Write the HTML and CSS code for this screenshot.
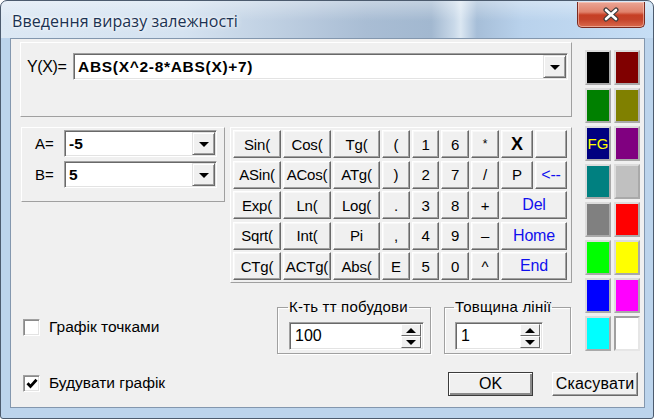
FILE: index.html
```html
<!DOCTYPE html>
<html>
<head>
<meta charset="utf-8">
<link rel="stylesheet" href="styles.css">
</head>
<body>
<div class="window">
  <div class="titlebar">
    <span class="title">Введення виразу залежності</span>
    <div class="close">
      <svg width="20" height="15" viewBox="0 0 20 15">
        <path d="M5 3 L15 12 M15 3 L5 12" stroke="#3d3d3d" stroke-width="5" stroke-linecap="round"/>
        <path d="M5 3 L15 12 M15 3 L5 12" stroke="#ffffff" stroke-width="2.6" stroke-linecap="round"/>
      </svg>
    </div>
  </div>
  <div class="client">
    <div class="upper">
      <div class="leftcol">
        <div class="panel top-panel">
          <span class="lbl yx">Y(X)=</span>
          <div class="combo wide"><span class="val main-val">ABS(X^2-8*ABS(X)+7)</span><span class="dd"><i class="tri"></i></span></div>
        </div>
        <div class="mid">
          <div class="panel ab-panel">
            <div class="ab-row"><span class="lbl ab">A=</span><div class="combo ab-combo"><span class="val">-5</span><span class="dd"><i class="tri"></i></span></div></div>
            <div class="ab-row"><span class="lbl ab">B=</span><div class="combo ab-combo"><span class="val">5</span><span class="dd"><i class="tri"></i></span></div></div>
          </div>
          <div class="panel keypad">
            <div class="key">Sin(</div><div class="key">Cos(</div><div class="key">Tg(</div><div class="key">(</div><div class="key">1</div><div class="key">6</div><div class="key star">*</div><div class="key bold">X</div><div class="key"></div>
            <div class="key">ASin(</div><div class="key">ACos(</div><div class="key">ATg(</div><div class="key">)</div><div class="key">2</div><div class="key">7</div><div class="key">/</div><div class="key">P</div><div class="key blue">&lt;--</div>
            <div class="key">Exp(</div><div class="key">Ln(</div><div class="key">Log(</div><div class="key">.</div><div class="key">3</div><div class="key">8</div><div class="key">+</div><div class="key blue span2">Del</div>
            <div class="key">Sqrt(</div><div class="key">Int(</div><div class="key">Pi</div><div class="key">,</div><div class="key">4</div><div class="key">9</div><div class="key">–</div><div class="key blue span2">Home</div>
            <div class="key">CTg(</div><div class="key">ACTg(</div><div class="key">Abs(</div><div class="key">E</div><div class="key">5</div><div class="key">0</div><div class="key">^</div><div class="key blue span2">End</div>
          </div>
        </div>
        <div class="options">
          <label class="check c1"><span class="box"></span><span class="ctext">Графік точками</span></label>
          <fieldset class="group g1">
            <legend>К-ть тт побудови</legend>
            <div class="spin s1"><span class="sv">100</span><span class="sb"><span class="half"><i class="up"></i></span><span class="half"><i class="down"></i></span></span></div>
          </fieldset>
          <fieldset class="group g2">
            <legend>Товщина лінії</legend>
            <div class="spin s2"><span class="sv">1</span><span class="sb"><span class="half"><i class="up"></i></span><span class="half"><i class="down"></i></span></span></div>
          </fieldset>
        </div>
      </div>
      <div class="palette">
        <div class="sw" style="background:#000000"></div><div class="sw" style="background:#800000"></div>
        <div class="sw" style="background:#008000"></div><div class="sw" style="background:#808000"></div>
        <div class="sw fg" style="background:#000080">FG</div><div class="sw" style="background:#800080"></div>
        <div class="sw" style="background:#008080"></div><div class="sw" style="background:#c0c0c0"></div>
        <div class="sw" style="background:#808080"></div><div class="sw" style="background:#ff0000"></div>
        <div class="sw" style="background:#00ff00"></div><div class="sw" style="background:#ffff00"></div>
        <div class="sw" style="background:#0000ff"></div><div class="sw" style="background:#ff00ff"></div>
        <div class="sw" style="background:#00ffff"></div><div class="sw white" style="background:#ffffff"></div>
      </div>
    </div>
    <div class="lower">
      <label class="check c2"><span class="box"><svg width="12" height="11" viewBox="0 0 12 11"><path d="M1.5 5.2 L4.5 8.5 L10.5 1.8" fill="none" stroke="#000" stroke-width="2.8"/></svg></span><span class="ctext">Будувати графік</span></label>
      <div class="btn ok">OK</div>
      <div class="btn cancel">Скасувати</div>
    </div>
  </div>
</div>
</body>
</html>
```
FILE: styles.css
```css
* { box-sizing: border-box; }
html, body { margin: 0; padding: 0; }
body {
  width: 654px;
  height: 419px;
  overflow: hidden;
  background: #ffffff;
  font-family: "Liberation Sans", Arial, sans-serif;
  color: #000;
}
.window {
  width: 654px;
  height: 419px;
  border: 1px solid #4c5b6e;
  border-radius: 7px 7px 3px 3px;
  padding: 0 8px 10px 9px;
  display: flex;
  flex-direction: column;
  background:
    linear-gradient(180deg, rgba(255,255,255,0.35) 0, rgba(255,255,255,0) 20px) no-repeat,
    linear-gradient(90deg, #dce8f4 0%, #d4e2f0 28%, #bccde0 44%, #a9bdd4 56%, #a2b8d0 66%, #c9d9e9 69.5%, #dbe7f2 70.5%, #a6bed8 73%, #b9d2ec 80%, #c6def5 100%) no-repeat,
    #bcd4ec;
  background-size: 100% 37px, 100% 37px, auto;
}
.titlebar {
  height: 37px;
  flex: none;
  display: flex;
  align-items: flex-start;
}
.title {
  font-family: "Open Sans", "Liberation Sans", sans-serif;
  font-size: 16px;
  line-height: 20px;
  color: #1b3252;
  padding: 10px 0 0 2px;
  text-shadow: 0 0 6px #ffffff, 0 0 3px #ffffff;
  letter-spacing: 0.1px;
}
.close {
  margin-left: auto;
  margin-top: 1px;
  width: 68px;
  height: 26px;
  border: 1px solid #7a2a20;
  border-top: none;
  border-radius: 0 0 5px 5px;
  background: linear-gradient(180deg, #eaa696 0%, #e0826c 40%, #c63f25 52%, #c5432a 70%, #d96a4d 100%);
  box-shadow: inset 0 0 0 1px rgba(255,220,210,0.5);
  display: flex;
  align-items: center;
  justify-content: center;
}
.client {
  flex: 1;
  background: #f0f0f0;
  border: 1px solid #8397ae;
  display: flex;
  flex-direction: column;
}
.upper { display: flex; }
.leftcol {
  width: 552px;
  margin: 3px 0 0 9px;
}
.panel {
  border: 1px solid;
  border-color: #ffffff #a0a0a0 #a0a0a0 #ffffff;
}
.top-panel {
  height: 75px;
  display: flex;
  align-items: flex-start;
  padding: 10px 3px 0 6px;
}
.lbl { font-size: 15px; }
.yx {
  width: 46px;
  line-height: 27px;
  font-size: 16px;
  letter-spacing: -0.4px;
}
.combo {
  height: 27px;
  background: #ffffff;
  border: 1px solid;
  border-color: #a0a0a0 #ffffff #ffffff #a0a0a0;
  box-shadow: inset 1px 1px #696969, inset -1px -1px #e3e3e3;
  display: flex;
  align-items: center;
  padding: 1px;
}
.combo .val {
  flex: 1;
  font-weight: bold;
  font-size: 15.5px;
  padding-left: 3px;
}
.combo .main-val { letter-spacing: 0.7px; }
.wide { flex: 1; }
.dd {
  width: 23px;
  height: 23px;
  background: #f0f0f0;
  border: 1px solid;
  border-color: #e3e3e3 #696969 #696969 #e3e3e3;
  box-shadow: inset 1px 1px #ffffff, inset -1px -1px #a0a0a0;
  display: flex;
  align-items: center;
  justify-content: center;
}
.tri {
  width: 0; height: 0;
  border-left: 5px solid transparent;
  border-right: 5px solid transparent;
  border-top: 5px solid #000;
  margin-top: 1px;
}
.mid {
  display: flex;
  margin-top: 10px;
  align-items: flex-start;
}
.ab-panel {
  width: 204px;
  height: 75px;
  margin-left: 1px;
  padding: 2px 0 0 13px;
  display: flex;
  flex-direction: column;
  gap: 4px;
}
.ab-row { display: flex; align-items: center; }
.ab { width: 29px; }
.ab-combo { width: 153px; }
.keypad {
  width: 342px;
  height: 156px;
  margin-left: 5px;
  padding: 2px;
  display: grid;
  grid-template-columns: 48px 48px 47px 28px 27px 28px 28px 32px 32px;
  grid-template-rows: repeat(5, 28px);
  column-gap: 2px;
  row-gap: 2.5px;
}
.key {
  background: #f0f0f0;
  border: 1px solid;
  border-color: #ffffff #696969 #696969 #ffffff;
  box-shadow: inset -1px -1px #a0a0a0, inset 1px 1px #f8f8f8;
  font-size: 15px;
  display: flex;
  align-items: center;
  justify-content: center;
  letter-spacing: -0.2px;
}
.key.blue { color: #1010ee; font-size: 16px; }
.key.span2 { grid-column: span 2; }
.key.bold { font-weight: bold; font-size: 18px; }
.key.star { font-size: 12px; align-items: flex-start; padding-top: 6px; }
.options {
  display: flex;
  align-items: flex-start;
  margin-top: 16px;
}
.check {
  display: flex;
  align-items: center;
  font-size: 15.5px;
}
.c1 { width: 254px; margin-left: 3px; margin-top: 19px; }
.box {
  width: 17px;
  height: 17px;
  background: #ffffff;
  border: 1px solid;
  border-color: #a0a0a0 #ffffff #ffffff #a0a0a0;
  box-shadow: inset 1px 1px #8a8a8a, inset -1px -1px #e3e3e3;
  display: flex;
  align-items: center;
  justify-content: center;
  margin-right: 9px;
  flex: none;
}
.group {
  margin: 0;
  border: 1px solid #a0a0a0;
  box-shadow: inset 1px 1px #ffffff, 1px 1px #ffffff;
  padding: 0 0 3px 11px;
  min-inline-size: 0;
}
.group legend {
  font-size: 15px;
  line-height: 16px;
  padding: 0 1px;
  margin-left: -1px;
  letter-spacing: 0.2px;
}
.g1 { width: 154px; }
.g2 { width: 127px; margin-left: 13px; padding-left: 10px; }
.spin {
  margin-top: 7px;
  height: 28px;
  background: #ffffff;
  border: 1px solid;
  border-color: #a0a0a0 #ffffff #ffffff #a0a0a0;
  box-shadow: inset 1px 1px #696969, inset -1px -1px #e3e3e3;
  display: flex;
  align-items: center;
  padding: 2px;
}
.s1 { width: 135px; }
.s2 { width: 88px; }
.sv { flex: 1; font-size: 16px; padding-left: 3px; }
.sb {
  width: 20px;
  height: 24px;
  display: flex;
  flex-direction: column;
}
.half {
  flex: 1;
  background: #f0f0f0;
  border: 1px solid;
  border-color: #ffffff #696969 #696969 #ffffff;
  display: flex;
  align-items: center;
  justify-content: center;
}
.up, .down {
  width: 0; height: 0;
  border-left: 5px solid transparent;
  border-right: 5px solid transparent;
}
.up { border-bottom: 5px solid #000; }
.down { border-top: 5px solid #000; }
.palette {
  margin: 11px 0 0 13px;
  display: grid;
  grid-template-columns: 26px 26px;
  grid-auto-rows: 35px;
  column-gap: 3px;
  row-gap: 3px;
  align-self: flex-start;
}
.sw {
  border: 2px solid;
  border-color: #dcdcdc #a9a9a9 #a9a9a9 #dcdcdc;
}
.sw.white { border-color: #a0a0a0 #e6e6e6 #e6e6e6 #a0a0a0; }
.fg {
  color: #ffff00;
  font-size: 15px;
  display: flex;
  align-items: center;
  justify-content: center;
}
.lower {
  display: flex;
  align-items: center;
  margin-top: 18px;
}
.c2 { margin-left: 12px; margin-top: -2px; }
.btn {
  height: 24px;
  background: #f0f0f0;
  border: 1px solid;
  border-color: #ffffff #696969 #696969 #ffffff;
  box-shadow: inset -1px -1px #a0a0a0;
  font-size: 16px;
  display: flex;
  align-items: center;
  justify-content: center;
}
.ok {
  width: 85px;
  margin-left: auto;
  border: 1px solid #3c3c3c;
  box-shadow: inset 1px 1px #ffffff, inset -2px -2px #8a8a8a;
}
.cancel {
  width: 86px;
  margin-left: 19px;
  margin-right: 6px;
  letter-spacing: 0.2px;
}
```
